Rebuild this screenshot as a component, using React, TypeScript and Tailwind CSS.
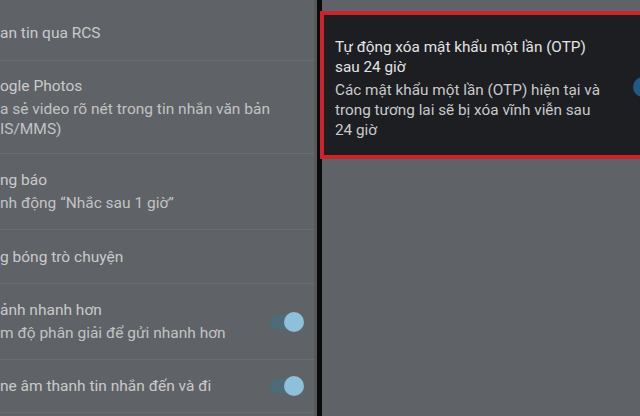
const font = { fontFamily: "Roboto, 'Noto Sans', sans-serif" };

interface Item {
  title: string;
  sub?: string[];
  height: string;
  toggle?: boolean;
}

const items: Item[] = [
  { title: "an tin qua RCS", height: "h-[61px] pt-[6px]" },
  {
    title: "ogle Photos",
    sub: ["a sẻ video rõ nét trong tin nhắn văn bản", "IS/MMS)"],
    height: "h-[93px]",
  },
  { title: "ng báo", sub: ["nh động “Nhắc sau 1 giờ”"], height: "h-[76px]" },
  { title: "g bóng trò chuyện", height: "h-[54px]" },
  {
    title: "ảnh nhanh hơn",
    sub: ["m độ phân giải để gửi nhanh hơn"],
    height: "h-[76px]",
    toggle: true,
  },
  { title: "ne âm thanh tin nhắn đến và đi", height: "h-[53px]", toggle: true },
];

function Toggle() {
  return (
    <div className="relative w-[34px] h-[20px] flex items-center shrink-0">
      <div className="w-[30px] h-[14px] rounded-full bg-[#4e6b79]" />
      <div className="absolute right-0 top-0 w-[20px] h-[20px] rounded-full bg-[#8ec0db]" />
    </div>
  );
}

export default function App() {
  return (
    <div
      className="flex w-[640px] h-[416px] overflow-hidden bg-[#5f6266]"
      style={font}
    >
      {/* left settings list */}
      <div className="w-[317px] shrink-0 flex flex-col border-r-[3px] border-[#575a5d]">
        {items.map((it, i) => (
          <div
            key={i}
            className={`${it.height} shrink-0 flex items-center justify-between pr-[10px] border-b border-[#6b6e71]`}
          >
            <div className="text-[15.5px] leading-[20px] text-[#c9cacb] whitespace-nowrap">
              <div className={it.sub ? "mb-[3px]" : ""}>{it.title}</div>
              {it.sub?.map((s) => (
                <div key={s} className="text-[#c2c3c4]">
                  {s}
                </div>
              ))}
            </div>
            {it.toggle && <Toggle />}
          </div>
        ))}
      </div>

      <div className="w-[5px] shrink-0 bg-[#0b0b0c]" />

      {/* right detail */}
      <div className="flex-1 min-w-0 pt-[11px] -ml-[2px]">
        <div className="w-[340px] h-[148px] border-[4px] border-[#cf2329] bg-[#1d1e22] pl-[11px] pt-[22px] flex">
          <div className="w-[298px] shrink-0 text-[15.3px] leading-[20px] whitespace-nowrap">
            <div className="text-[#e3e3e4] mb-[3px]">
              Tự động xóa mật khẩu một lần (OTP)
              <br />
              sau 24 giờ
            </div>
            <div className="text-[#c8c9ca]">
              Các mật khẩu một lần (OTP) hiện tại và
              <br />
              trong tương lai sẽ bị xóa vĩnh viễn sau
              <br />
              24 giờ
            </div>
          </div>
          <div className="mt-[40px] w-[20px] h-[20px] rounded-full bg-[#1f5c85] shrink-0" />
        </div>
      </div>
    </div>
  );
}
